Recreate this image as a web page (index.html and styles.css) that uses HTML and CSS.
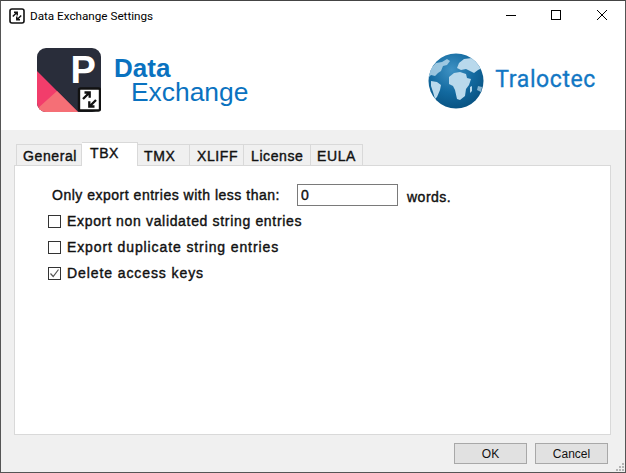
FILE: index.html
```html
<!DOCTYPE html>
<html>
  <head>
    <title>Data Exchange Settings</title>
    <link rel="stylesheet" href="styles.css">
  </head>
  <body>
    <div class="window">
      <div class="titlebar">
        <svg class="app-icon" width="16" height="16" viewBox="0 0 16 16">
          <rect x="1" y="1" width="14" height="14" rx="2" fill="#fff" stroke="#111" stroke-width="1.6"/>
          <path d="M3.8 8.5 L8 4.3 M5 4.2 H8.2 V7.4 M12.2 7.5 L8 11.7 M11 11.8 H7.8 V8.6" fill="none" stroke="#111" stroke-width="1.5"/>
        </svg>
        <span class="title">Data Exchange Settings</span>
        <div class="controls">
          <svg width="12" height="12" viewBox="0 0 12 12"><path d="M1 6.5 H11" stroke="#000" fill="none"/></svg>
          <svg width="12" height="12" viewBox="0 0 12 12"><rect x="1.5" y="1.5" width="9" height="9" stroke="#000" fill="none"/></svg>
          <svg width="12" height="12" viewBox="0 0 12 12"><path d="M1 1 L11 11 M11 1 L1 11" stroke="#000" fill="none"/></svg>
        </div>
      </div>

      <div class="banner">
        <div class="brand">
          <svg class="logo" width="64" height="64" viewBox="0 0 64 64">
            <defs><clipPath id="round"><rect width="64" height="64" rx="9"/></clipPath></defs>
            <g clip-path="url(#round)">
              <rect width="64" height="64" fill="#292d3a"/>
              <path d="M0 23 L41 64 H0 Z" fill="#f23d6b"/>
              <path d="M0 64 V61 L20 43 L41 64 Z" fill="#f56f76"/>
            </g>
            <text x="33.5" y="35" class="logo-letter">P</text>
            <rect x="42" y="40.5" width="21" height="22" rx="1.5" fill="#fff" stroke="#111" stroke-width="2.4"/>
            <path d="M46 51 L52 45 M47.5 44.5 H52.7 V49.7 M59 52 L53 58 M57.5 58.5 H52.3 V53.3" fill="none" stroke="#111" stroke-width="2.3"/>
          </svg>
          <div class="wordmark">
            <div class="word-data">Data</div>
            <div class="word-exchange">Exchange</div>
          </div>
        </div>
        <div class="vendor">
          <svg width="56" height="56" viewBox="0 0 56 56">
            <defs>
              <radialGradient id="sea" cx="0.42" cy="0.3" r="0.75">
                <stop offset="0" stop-color="#3f92c4"/>
                <stop offset="0.55" stop-color="#12699f"/>
                <stop offset="1" stop-color="#07507f"/>
              </radialGradient>
              <clipPath id="ball"><circle cx="28" cy="28" r="27.5"/></clipPath>
            </defs>
            <circle cx="28" cy="28" r="27.5" fill="url(#sea)"/>
            <g clip-path="url(#ball)" fill="#b9d9ec">
              <path d="M0 25 L3 15 L8 10 L14 9 L19 6 L22 8 L19 12 L15 13 L13 18 L10 20 L7 23 L3 22 Z" opacity="0.8"/>
              <path d="M3 28 L9 29 L13 32 L12 37 L9 44 L7 46 L5 39 L3 33 Z"/>
              <path d="M21 24 L26 20 L32 19 L38 21 L39 25 L43 26 L41 32 L38 36 L37 43 L32 47 L29 46 L27 37 L25 33 L21 31 Z"/>
              <path d="M29 15 L31 10 L36 6 L44 5 L50 9 L54 15 L50 17 L46 20 L42 18 L38 16 L33 17 Z"/>
              <path d="M42 34 L44 33 L44 38 L42 40 Z"/>
              <path d="M50 33 L54 34 L53 39 L49 37 Z" opacity="0.7"/>
            </g>
          </svg>
          <span class="vendor-name">Traloctec</span>
        </div>
      </div>

      <div class="body">
        <div class="tabs">
          <div class="tab tab-first">General</div>
          <div class="tab tab-active">TBX</div>
          <div class="tab tab-tmx">TMX</div>
          <div class="tab tab-xliff">XLIFF</div>
          <div class="tab tab-license">License</div>
          <div class="tab tab-eula">EULA</div>
        </div>
        <div class="panel">
          <div class="limit-row">
            <span class="limit-label">Only export entries with less than:</span>
            <input class="limit-input" type="text" value="0">
            <span class="limit-unit">words.</span>
          </div>
          <div class="option"><span class="box"></span><span class="label-validated">Export non validated string entries</span></div>
          <div class="option"><span class="box"></span><span class="label-duplicate">Export duplicate string entries</span></div>
          <div class="option">
            <span class="box">
              <svg width="11" height="11" viewBox="0 0 11 11"><path d="M1.5 5.5 L4.2 8.5 L9.5 1.5" fill="none" stroke="#555" stroke-width="1.2"/></svg>
            </span>
            <span class="label-keys">Delete access keys</span>
          </div>
        </div>
        <div class="footer">
          <button class="btn">OK</button>
          <button class="btn">Cancel</button>
        </div>
      </div>

      <svg class="grip" width="10" height="10" viewBox="0 0 10 10" fill="#b4b4b4">
        <rect x="7" y="1" width="2" height="2"/>
        <rect x="4" y="4" width="2" height="2"/><rect x="7" y="4" width="2" height="2"/>
        <rect x="1" y="7" width="2" height="2"/><rect x="4" y="7" width="2" height="2"/><rect x="7" y="7" width="2" height="2"/>
      </svg>
    </div>
  </body>
</html>
```

FILE: styles.css
```css
html, body {
  margin: 0;
  padding: 0;
}
.window {
  position: relative;
  box-sizing: border-box;
  width: 626px;
  height: 473px;
  display: flex;
  flex-direction: column;
  border: 1px solid #555;
  border-top-color: #444;
  background-color: #f0f0f0;
  font-family: "Liberation Sans", Arial, sans-serif;
  color: #111;
  overflow: hidden;
}
.titlebar {
  height: 30px;
  display: flex;
  align-items: center;
  padding-left: 8px;
  background-color: #fff;
}
.app-icon {
  margin-right: 5px;
}
.title {
  font-family: "Roboto", sans-serif;
  font-size: 11.7px;
  color: #000;
}
.controls {
  margin-left: auto;
  display: flex;
  padding-right: 17px;
  padding-bottom: 2px;
  gap: 33px;
}
.controls svg:last-child {
  margin-left: 1px;
}
.banner {
  height: 99px;
  display: flex;
  justify-content: space-between;
  background-color: #fff;
  padding-left: 36px;
  padding-right: 29px;
  box-sizing: border-box;
}
.brand {
  display: flex;
  padding-top: 17px;
  align-items: flex-start;
}
.logo-letter {
  font-family: "Liberation Sans", sans-serif;
  font-weight: bold;
  font-size: 38px;
  fill: #fff;
}
.wordmark {
  margin-left: 13px;
  margin-top: 9px;
  color: #0a72c0;
}
.word-data {
  font-size: 26px;
  font-weight: bold;
  line-height: 23px;
}
.word-exchange {
  font-size: 26.4px;
  line-height: 25px;
  margin-left: 17px;
}
.vendor {
  display: flex;
  align-items: flex-start;
  padding-top: 22px;
}
.vendor-name {
  font-family: "Roboto", sans-serif;
  font-size: 23px;
  letter-spacing: 0.6px;
  -webkit-text-stroke: 0.3px #1277c4;
  color: #1277c4;
  margin-left: 11px;
  margin-top: 13px;
}
.body {
  flex: 1;
  display: flex;
  flex-direction: column;
  padding: 13px 14px 0 13px;
}
.tabs {
  display: flex;
  align-items: flex-end;
  height: 22px;
  padding-left: 2px;
  font-size: 14px;
  letter-spacing: 0.6px;
  -webkit-text-stroke: 0.4px #111;
}
.tab {
  box-sizing: border-box;
  height: 21px;
  padding: 3px 0 0 6px;
  border: 1px solid #d9d9d9;
  border-bottom: none;
  border-left: none;
  background-color: #f0f0f0;
}
.tab-first {
  width: 66px;
  border-left: 1px solid #d9d9d9;
}
.tab-active {
  width: 56px;
  height: 24px;
  padding: 2px 0 0 8px;
  margin-bottom: -1px;
  background-color: #fff;
  position: relative;
}
.tab-tmx {
  width: 52px;
}
.tab-xliff {
  width: 54px;
  padding-left: 7px;
}
.tab-license {
  width: 67px;
  padding-left: 7px;
}
.tab-eula {
  width: 52px;
}
.panel {
  flex: 1;
  background-color: #fff;
  border: 1px solid #d9d9d9;
  padding: 18px 0 0 33px;
  font-size: 14px;
  -webkit-text-stroke: 0.4px #111;
}
.limit-row {
  display: flex;
  align-items: center;
  padding-left: 4px;
  height: 22px;
  margin-bottom: 2px;
}
.limit-label {
  width: 245px;
  letter-spacing: 0.51px;
}
.limit-input {
  box-sizing: border-box;
  width: 101px;
  height: 22px;
  border: 1px solid #7a7a7a;
  padding: 0 3px;
  font-family: "Liberation Sans", Arial, sans-serif;
  font-size: 14px;
  color: #111;
  -webkit-text-stroke: 0.4px #111;
}
.limit-unit {
  margin-left: 9px;
  padding-top: 3px;
  letter-spacing: 0.5px;
}
.option {
  display: flex;
  align-items: center;
  height: 26px;
}
.label-validated {
  letter-spacing: 0.67px;
}
.label-duplicate {
  letter-spacing: 0.89px;
}
.label-keys {
  letter-spacing: 0.91px;
}
.box {
  box-sizing: border-box;
  width: 13px;
  height: 13px;
  border: 1px solid #333;
  background-color: #fff;
  margin-right: 6px;
  display: flex;
}
.footer {
  height: 37px;
  display: flex;
  justify-content: flex-end;
  align-items: flex-start;
  gap: 8px;
  padding-top: 8px;
  padding-right: 3px;
  box-sizing: border-box;
}
.btn {
  box-sizing: border-box;
  width: 73px;
  height: 21px;
  padding: 0;
  border: 1px solid #a8a8a8;
  background-color: #e1e1e1;
  font-family: "Liberation Sans", Arial, sans-serif;
  font-size: 12px;
  color: #111;
}
.grip {
  position: absolute;
  right: 0;
  bottom: 0;
}
```
